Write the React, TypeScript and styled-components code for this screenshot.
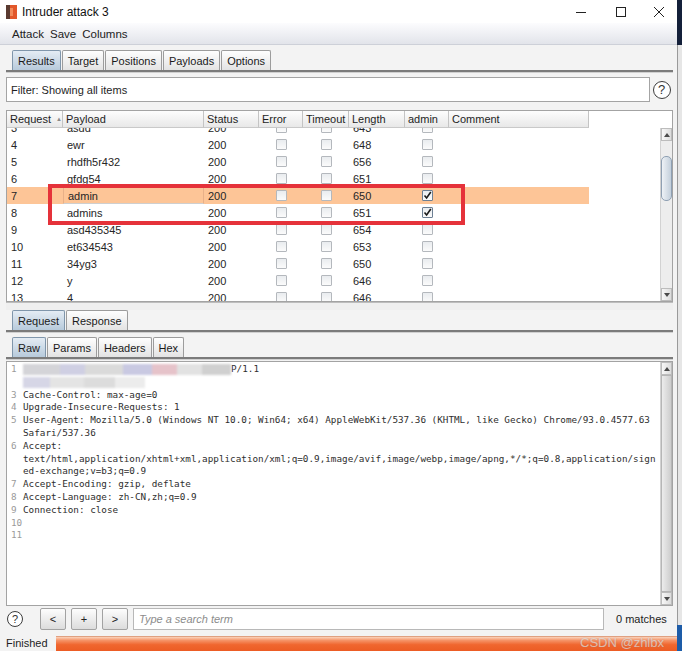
import React from 'react';
import styled, { createGlobalStyle, css } from 'styled-components';

const COLS = '56px 141px 55px 44px 46px 56px 44px 140px';

const columns = ['Request', 'Payload', 'Status', 'Error', 'Timeout', 'Length', 'admin', 'Comment'];

interface ResultRow {
  id: number;
  payload: string;
  status: number;
  length: number;
  admin?: boolean;
  selected?: boolean;
}

const rows: ResultRow[] = [
  { id: 3, payload: 'asdd', status: 200, length: 643 },
  { id: 4, payload: 'ewr', status: 200, length: 648 },
  { id: 5, payload: 'rhdfh5r432', status: 200, length: 656 },
  { id: 6, payload: 'gfdg54', status: 200, length: 651 },
  { id: 7, payload: 'admin', status: 200, length: 650, admin: true, selected: true },
  { id: 8, payload: 'admins', status: 200, length: 651, admin: true },
  { id: 9, payload: 'asd435345', status: 200, length: 654 },
  { id: 10, payload: 'et634543', status: 200, length: 653 },
  { id: 11, payload: '34yg3', status: 200, length: 650 },
  { id: 12, payload: 'y', status: 200, length: 646 },
  { id: 13, payload: '4', status: 200, length: 646 },
];

const requestLines: { n?: number; text: string }[] = [
  { n: 3, text: 'Cache-Control: max-age=0' },
  { n: 4, text: 'Upgrade-Insecure-Requests: 1' },
  {
    n: 5,
    text: 'User-Agent: Mozilla/5.0 (Windows NT 10.0; Win64; x64) AppleWebKit/537.36 (KHTML, like Gecko) Chrome/93.0.4577.63',
  },
  { text: 'Safari/537.36' },
  { n: 6, text: 'Accept:' },
  {
    text: 'text/html,application/xhtml+xml,application/xml;q=0.9,image/avif,image/webp,image/apng,*/*;q=0.8,application/sign',
  },
  { text: 'ed-exchange;v=b3;q=0.9' },
  { n: 7, text: 'Accept-Encoding: gzip, deflate' },
  { n: 8, text: 'Accept-Language: zh-CN,zh;q=0.9' },
  { n: 9, text: 'Connection: close' },
  { n: 10, text: '' },
  { n: 11, text: '' },
];

const GlobalStyle = createGlobalStyle`
  html, body {
    margin: 0;
    padding: 0;
  }
  body {
    width: 682px;
    height: 651px;
    overflow: hidden;
    background: #f3f3f3;
    font-family: "Liberation Sans", Arial, sans-serif;
    font-size: 11px;
    color: #1e1e1e;
  }
  * {
    box-sizing: border-box;
  }
`;

const ArrowIcon: React.FC<{ down?: boolean }> = ({ down }) => (
  <svg width="6" height="4" viewBox="0 0 6 4">
    <path d={down ? 'M0 0 H6 L3 4 Z' : 'M0 4 H6 L3 0 Z'} fill="#4a4a4a" />
  </svg>
);

const Checkbox: React.FC<{ checked?: boolean }> = ({ checked }) => (
  <CheckBoxFrame $checked={checked}>
    {checked && (
      <svg width="9" height="9" viewBox="0 0 9 9">
        <path d="M1.5 4.5 L3.6 7 L7.8 1" stroke="#1b1b1b" strokeWidth="1.6" fill="none" />
      </svg>
    )}
  </CheckBoxFrame>
);

const App: React.FC = () => {
  return (
    <Root>
      <GlobalStyle />
      <Window>
        <TitleBar>
          <svg width="11" height="14" viewBox="0 0 11 14">
            <rect x="0" y="0" width="11" height="14" fill="#e2572a" />
            <rect x="0" y="0" width="4" height="14" fill="#5a3a30" />
            <rect x="4" y="3" width="3" height="8" fill="#f28a5a" />
          </svg>
          <TitleText>Intruder attack 3</TitleText>
          <WinButton $w={42}>
            <svg width="10" height="10" viewBox="0 0 10 10">
              <path d="M0 5.5 H10" stroke="#222" strokeWidth="1" />
            </svg>
          </WinButton>
          <WinButton $w={38}>
            <svg width="10" height="10" viewBox="0 0 10 10">
              <rect x="0.5" y="0.5" width="9" height="9" stroke="#222" fill="none" />
            </svg>
          </WinButton>
          <WinButton $w={37}>
            <svg width="10" height="10" viewBox="0 0 10 10">
              <path d="M0 0 L10 10 M10 0 L0 10" stroke="#222" strokeWidth="1" />
            </svg>
          </WinButton>
        </TitleBar>
        <MenuBar>
          <span>Attack</span>
          <span>Save</span>
          <span>Columns</span>
        </MenuBar>

        <Content>
          <TabStrip>
            <Tab $active>Results</Tab>
            <Tab>Target</Tab>
            <Tab>Positions</Tab>
            <Tab>Payloads</Tab>
            <Tab>Options</Tab>
          </TabStrip>

          <FilterRow>
            <FilterBox>Filter: Showing all items</FilterBox>
            <HelpSlot>
              <HelpIcon $size={18}>?</HelpIcon>
            </HelpSlot>
          </FilterRow>

          <TableBox>
            <HeaderRow>
              {columns.map((c, i) => (
                <HeaderCell key={c}>
                  {c}
                  {i === 0 && <SortMark>▲</SortMark>}
                </HeaderCell>
              ))}
            </HeaderRow>
            <TableBody>
              <RowViewport>
                <RowList>
                  {rows.map((r) => (
                    <Row key={r.id} $selected={r.selected}>
                      <Cell>{r.id}</Cell>
                      <Cell $focus={r.selected}>{r.payload}</Cell>
                      <Cell>{r.status}</Cell>
                      <CheckCell>
                        <Checkbox />
                      </CheckCell>
                      <CheckCell>
                        <Checkbox />
                      </CheckCell>
                      <Cell>{r.length}</Cell>
                      <CheckCell>
                        <Checkbox checked={r.admin} />
                      </CheckCell>
                      <Cell />
                    </Row>
                  ))}
                </RowList>
              </RowViewport>
              <ScrollTrack>
                <ScrollArrow>
                  <ArrowIcon />
                </ScrollArrow>
                <ScrollThumb $top={15} $height={45} />
                <ScrollSpace />
                <ScrollArrow>
                  <ArrowIcon down />
                </ScrollArrow>
              </ScrollTrack>
            </TableBody>
            <Annotation />
          </TableBox>

          <Splitter />

          <TabStrip>
            <Tab $active>Request</Tab>
            <Tab>Response</Tab>
          </TabStrip>

          <SubTabStrip>
            <Tab $active>Raw</Tab>
            <Tab>Params</Tab>
            <Tab>Headers</Tab>
            <Tab>Hex</Tab>
          </SubTabStrip>

          <Editor>
            <EditorText>
              <Line>
                <LineNo>1</LineNo>
                <Mosaic $w={208} $tone="linear-gradient(90deg, #d4d4d8 0 18%, #cfcfe3 18% 30%, #dadada 30% 48%, #c9c9e2 48% 62%, #e6c3ca 62% 74%, #e2e2e2 74% 86%, #d0d0d0 86%)" />
                <span>P/1.1</span>
              </Line>
              <Line>
                <LineNo />
                <Mosaic $w={122} $tone="linear-gradient(90deg, #d6d6e6 0 22%, #e4e4e4 22% 50%, #dcdcdc 50% 75%, #ececec 75%)" />
              </Line>
              {requestLines.map((l, i) => (
                <Line key={i}>
                  <LineNo>{l.n ?? ''}</LineNo>
                  <span>{l.text}</span>
                </Line>
              ))}
            </EditorText>
            <ScrollTrack $plain>
              <ScrollArrow>
                <ArrowIcon />
              </ScrollArrow>
              <FullThumb />
              <ScrollArrow>
                <ArrowIcon down />
              </ScrollArrow>
            </ScrollTrack>
          </Editor>

          <SearchBar>
            <HelpIcon $size={16}>?</HelpIcon>
            <NavButton $first>&lt;</NavButton>
            <NavButton>+</NavButton>
            <NavButton>&gt;</NavButton>
            <SearchInput>Type a search term</SearchInput>
            <Matches>0 matches</Matches>
          </SearchBar>
        </Content>

        <StatusBar>
          <StatusText>Finished</StatusText>
          <Progress />
          <Watermark>CSDN @zhlbx</Watermark>
        </StatusBar>
      </Window>
      <EdgeStrip>
        <EdgeTop />
        <EdgeMiddle />
        <EdgeBottom />
      </EdgeStrip>
    </Root>
  );
};

export default App;

const Root = styled.div`
  width: 682px;
  height: 651px;
  display: flex;
`;

const Window = styled.div`
  width: 677px;
  height: 651px;
  display: flex;
  flex-direction: column;
`;

const TitleBar = styled.header`
  height: 23px;
  display: flex;
  align-items: center;
  padding-left: 6px;
  background: #fff;
`;

const TitleText = styled.span`
  flex: 1;
  margin-left: 5px;
  font-size: 12px;
  color: #111;
`;

const WinButton = styled.div<{ $w: number }>`
  width: ${({ $w }) => $w}px;
  height: 23px;
  display: flex;
  align-items: center;
  justify-content: center;
`;

const MenuBar = styled.nav`
  height: 22px;
  display: flex;
  align-items: center;
  gap: 6px;
  padding-left: 12px;
  font-size: 11.5px;
  color: #222;
  background: linear-gradient(#fcfcfe, #e2e4ea);
  border-bottom: 1px solid #cdd0d8;
`;

const Content = styled.main`
  flex: 1;
  display: flex;
  flex-direction: column;
  padding: 5px 4px 2px 6px;
  background: #f3f3f3;
`;

const TabStrip = styled.div`
  height: 22px;
  display: flex;
  align-items: flex-end;
  gap: 1px;
  padding-left: 6px;
  border-bottom: 2px solid #7b7b7b;
  box-shadow: 0 1px 0 #d0d0d0;
`;

const SubTabStrip = styled(TabStrip)`
  margin-top: 5px;
`;

const Tab = styled.div<{ $active?: boolean }>`
  height: 20px;
  display: flex;
  align-items: center;
  padding: 0 5px;
  font-size: 11px;
  color: #1a1a1a;
  border: 1px solid #9c9c9c;
  border-bottom: none;
  border-radius: 2px 2px 0 0;
  background: linear-gradient(#fefefe, #e3e3e3);
  ${({ $active }) =>
    $active &&
    css`
      border-color: #8096ab;
      background: linear-gradient(#e4ecf4, #b7cadb);
    `}
`;

const FilterRow = styled.div`
  height: 25px;
  margin-top: 5px;
  display: flex;
`;

const FilterBox = styled.div`
  flex: 1;
  display: flex;
  align-items: center;
  padding-left: 4px;
  font-size: 11px;
  background: #fff;
  border: 1px solid #a4a4a4;
`;

const HelpSlot = styled.div`
  width: 23px;
  display: flex;
  align-items: center;
  justify-content: center;
`;

const HelpIcon = styled.div<{ $size: number }>`
  width: ${({ $size }) => $size}px;
  height: ${({ $size }) => $size}px;
  flex: none;
  display: flex;
  align-items: center;
  justify-content: center;
  border: 1.5px solid #3c3c3c;
  border-radius: 50%;
  background: #fff;
  font-size: ${({ $size }) => $size - 5}px;
  color: #333;
`;

const TableBox = styled.section`
  position: relative;
  height: 192px;
  margin-top: 8px;
  display: flex;
  flex-direction: column;
  background: #fff;
  border: 1px solid #a3a3a3;
`;

const HeaderRow = styled.div`
  position: relative;
  z-index: 1;
  height: 17px;
  display: grid;
  grid-template-columns: ${COLS};
`;

const HeaderCell = styled.div`
  display: flex;
  align-items: center;
  gap: 5px;
  padding-left: 3px;
  font-size: 11px;
  color: #1e1e1e;
  background: linear-gradient(#fdfdfd, #e8e8e8);
  border-right: 1px solid #c4c4c4;
  border-bottom: 1px solid #c9c9c9;
`;

const SortMark = styled.span`
  font-size: 6px;
  color: #8a8a8a;
`;

const TableBody = styled.div`
  flex: 1;
  display: flex;
  min-height: 0;
`;

const RowViewport = styled.div`
  flex: 1;
  overflow: hidden;
`;

const RowList = styled.div`
  margin-top: -9px;
`;

const Row = styled.div<{ $selected?: boolean }>`
  width: 582px;
  height: 17px;
  display: grid;
  grid-template-columns: ${COLS};
  align-items: stretch;
  background: ${({ $selected }) => ($selected ? '#fdc597' : 'transparent')};
`;

const Cell = styled.div<{ $focus?: boolean }>`
  display: flex;
  align-items: center;
  padding-left: 4px;
  font-size: 11px;
  color: #262626;
  ${({ $focus }) =>
    $focus &&
    css`
      border: 1px solid #e8b088;
      border-bottom-color: #cfcfcf;
    `}
`;

const CheckCell = styled.div`
  display: flex;
  align-items: center;
  justify-content: center;
`;

const CheckBoxFrame = styled.div<{ $checked?: boolean }>`
  width: 11px;
  height: 11px;
  display: flex;
  align-items: center;
  justify-content: center;
  border: 1px solid ${({ $checked }) => ($checked ? '#6d7f93' : '#b4b8bd')};
  border-radius: 1px;
  background: linear-gradient(#e9ecef, #fbfbfb);
`;

const ScrollTrack = styled.div<{ $plain?: boolean }>`
  width: 12px;
  flex: none;
  display: flex;
  flex-direction: column;
  background: ${({ $plain }) => ($plain ? '#dadada' : '#ededed')};
  border-left: 1px solid #d2d2d2;
`;

const ScrollArrow = styled.div`
  height: 13px;
  flex: none;
  display: flex;
  align-items: center;
  justify-content: center;
  background: linear-gradient(90deg, #f7f7f7, #dcdcdc);
  border: 1px solid #bcbcbc;
`;

const ScrollThumb = styled.div<{ $top: number; $height: number }>`
  margin-top: ${({ $top }) => $top}px;
  height: ${({ $height }) => $height}px;
  border: 1px solid #8fa0b3;
  border-radius: 5px;
  background: linear-gradient(90deg, #eef2f6, #c3cfdb);
`;

const FullThumb = styled.div`
  flex: 1;
  border: 1px solid #b6b6b6;
  background: linear-gradient(90deg, #ececec, #cdcdcd);
`;

const ScrollSpace = styled.div`
  flex: 1;
`;

const Annotation = styled.div`
  position: absolute;
  left: 41px;
  top: 73px;
  width: 417px;
  height: 41px;
  border: 4px solid #e5323a;
  pointer-events: none;
`;

const Splitter = styled.div`
  height: 8px;
  border-top: 1px solid #bdbdbd;
  background: #efefef;
`;

const Editor = styled.section`
  height: 245px;
  margin-top: 2px;
  display: flex;
  background: #fff;
  border: 1px solid #a3a3a3;
`;

const EditorText = styled.div`
  flex: 1;
  padding-top: 1px;
  font-family: "DejaVu Sans Mono", "Liberation Mono", monospace;
  font-size: 9.3px;
  line-height: 12.8px;
  color: #2e2e2e;
  white-space: pre;
  overflow: hidden;
`;

const Line = styled.div`
  height: 12.8px;
  display: flex;
  align-items: center;
`;

const LineNo = styled.span`
  width: 16px;
  flex: none;
  padding-left: 4px;
  color: #9a9a9a;
`;

const Mosaic = styled.span<{ $w: number; $tone: string }>`
  display: inline-block;
  width: ${({ $w }) => $w}px;
  height: 11px;
  background: ${({ $tone }) => $tone};
  filter: blur(1.2px);
`;

const SearchBar = styled.div`
  height: 26px;
  display: flex;
  align-items: center;
  padding-left: 1px;
`;

const NavButton = styled.div<{ $first?: boolean }>`
  width: 26px;
  height: 22px;
  margin-left: ${({ $first }) => ($first ? 17 : 5)}px;
  display: flex;
  align-items: center;
  justify-content: center;
  font-size: 11px;
  color: #222;
  border: 1px solid #a2a2a2;
  border-radius: 2px;
  background: linear-gradient(#fdfdfd, #dcdcdc);
`;

const SearchInput = styled.div`
  flex: 1;
  height: 22px;
  margin-left: 5px;
  display: flex;
  align-items: center;
  padding-left: 5px;
  font-size: 11px;
  font-style: italic;
  color: #8c8c8c;
  background: #fff;
  border: 1px solid #b8b8b8;
`;

const Matches = styled.div`
  width: 69px;
  padding-left: 12px;
  font-size: 11px;
  color: #222;
`;

const StatusBar = styled.footer`
  position: relative;
  height: 17px;
  display: flex;
  align-items: stretch;
  background: #f3f3f3;
`;

const StatusText = styled.div`
  width: 56px;
  display: flex;
  align-items: center;
  padding-left: 6px;
  font-size: 11px;
`;

const Progress = styled.div`
  flex: 1;
  margin-top: 2px;
  border-top: 1px solid #e0a080;
  background: linear-gradient(#fbd3bb 0, #f59266 25%, #f0662f 55%, #ec5c24 100%);
`;

const Watermark = styled.span`
  position: absolute;
  right: 13px;
  top: 1px;
  font-size: 13px;
  color: rgba(255, 255, 255, 0.55);
  text-shadow: 0 0 1px rgba(120, 120, 120, 0.5);
`;

const EdgeStrip = styled.div`
  width: 5px;
  display: flex;
  flex-direction: column;
`;

const EdgeTop = styled.div`
  height: 45px;
  background: #14203a;
`;

const EdgeMiddle = styled.div`
  flex: 1;
  background: #e6e6e6;
  border-left: 1px solid #9a9a9a;
`;

const EdgeBottom = styled.div`
  height: 26px;
  background: #1d5ca8;
`;
